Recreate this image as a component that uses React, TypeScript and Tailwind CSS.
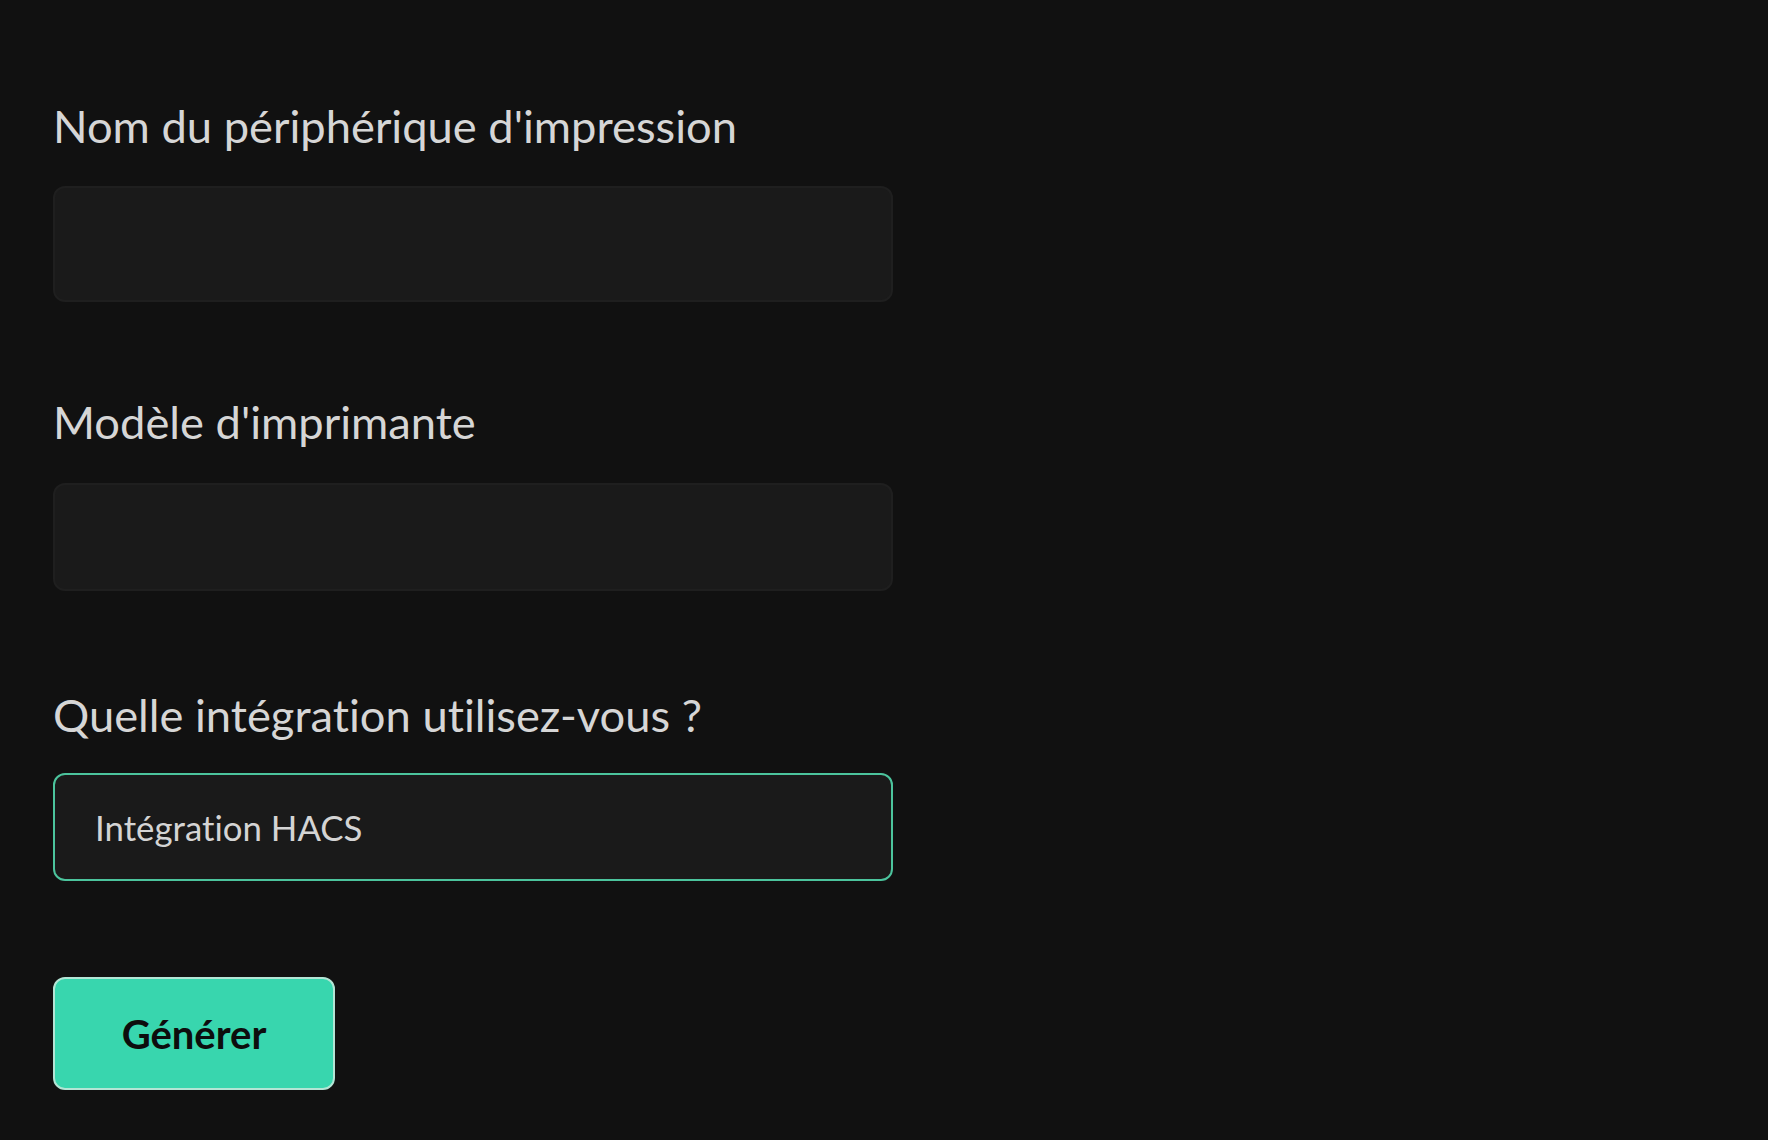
import { useState } from 'react'

const labelClass = "block h-[50px] text-[45.3px] leading-[50px] text-[#d6d6d6]"
const inputClass =
  "w-[840px] rounded-[12px] border-2 bg-[#1a1a1a] px-[40px] text-[34.8px] text-[#d4d4d4] outline-none"

export default function App() {
  const [device, setDevice] = useState('')
  const [model, setModel] = useState('')
  const [integration, setIntegration] = useState('Intégration HACS')

  return (
    <div
      className="min-h-screen w-full bg-[#111111] pl-[53px] pt-[101px]"
      style={{ fontFamily: 'Lato, "Noto Sans", sans-serif', fontVariantLigatures: 'none' }}
    >
      <label className={labelClass}>Nom du périphérique d'impression</label>
      <input
        value={device}
        onChange={e => setDevice(e.target.value)}
        className={`${inputClass} mt-[35px] h-[116px] border-[#1f1f1f]`}
      />

      <label className={`${labelClass} mt-[95px]`}>Modèle d'imprimante</label>
      <input
        value={model}
        onChange={e => setModel(e.target.value)}
        className={`${inputClass} mt-[36px] h-[108px] border-[#1f1f1f]`}
      />

      <label className={`${labelClass} mt-[99px]`}>Quelle intégration utilisez-vous ?</label>
      <input
        value={integration}
        onChange={e => setIntegration(e.target.value)}
        className={`${inputClass} mt-[33px] h-[108px] border-[#4cc49d]`}
        style={{ fontVariantLigatures: 'none' }}
      />

      <div className="mt-[96px]">
        <button className="flex h-[113px] w-[282px] items-center justify-center rounded-[12px] border-2 border-[#b3e5d5] bg-[#38d6ae] text-[40px] font-bold text-[#0d0d0d]">
          Générer
        </button>
      </div>
    </div>
  )
}
